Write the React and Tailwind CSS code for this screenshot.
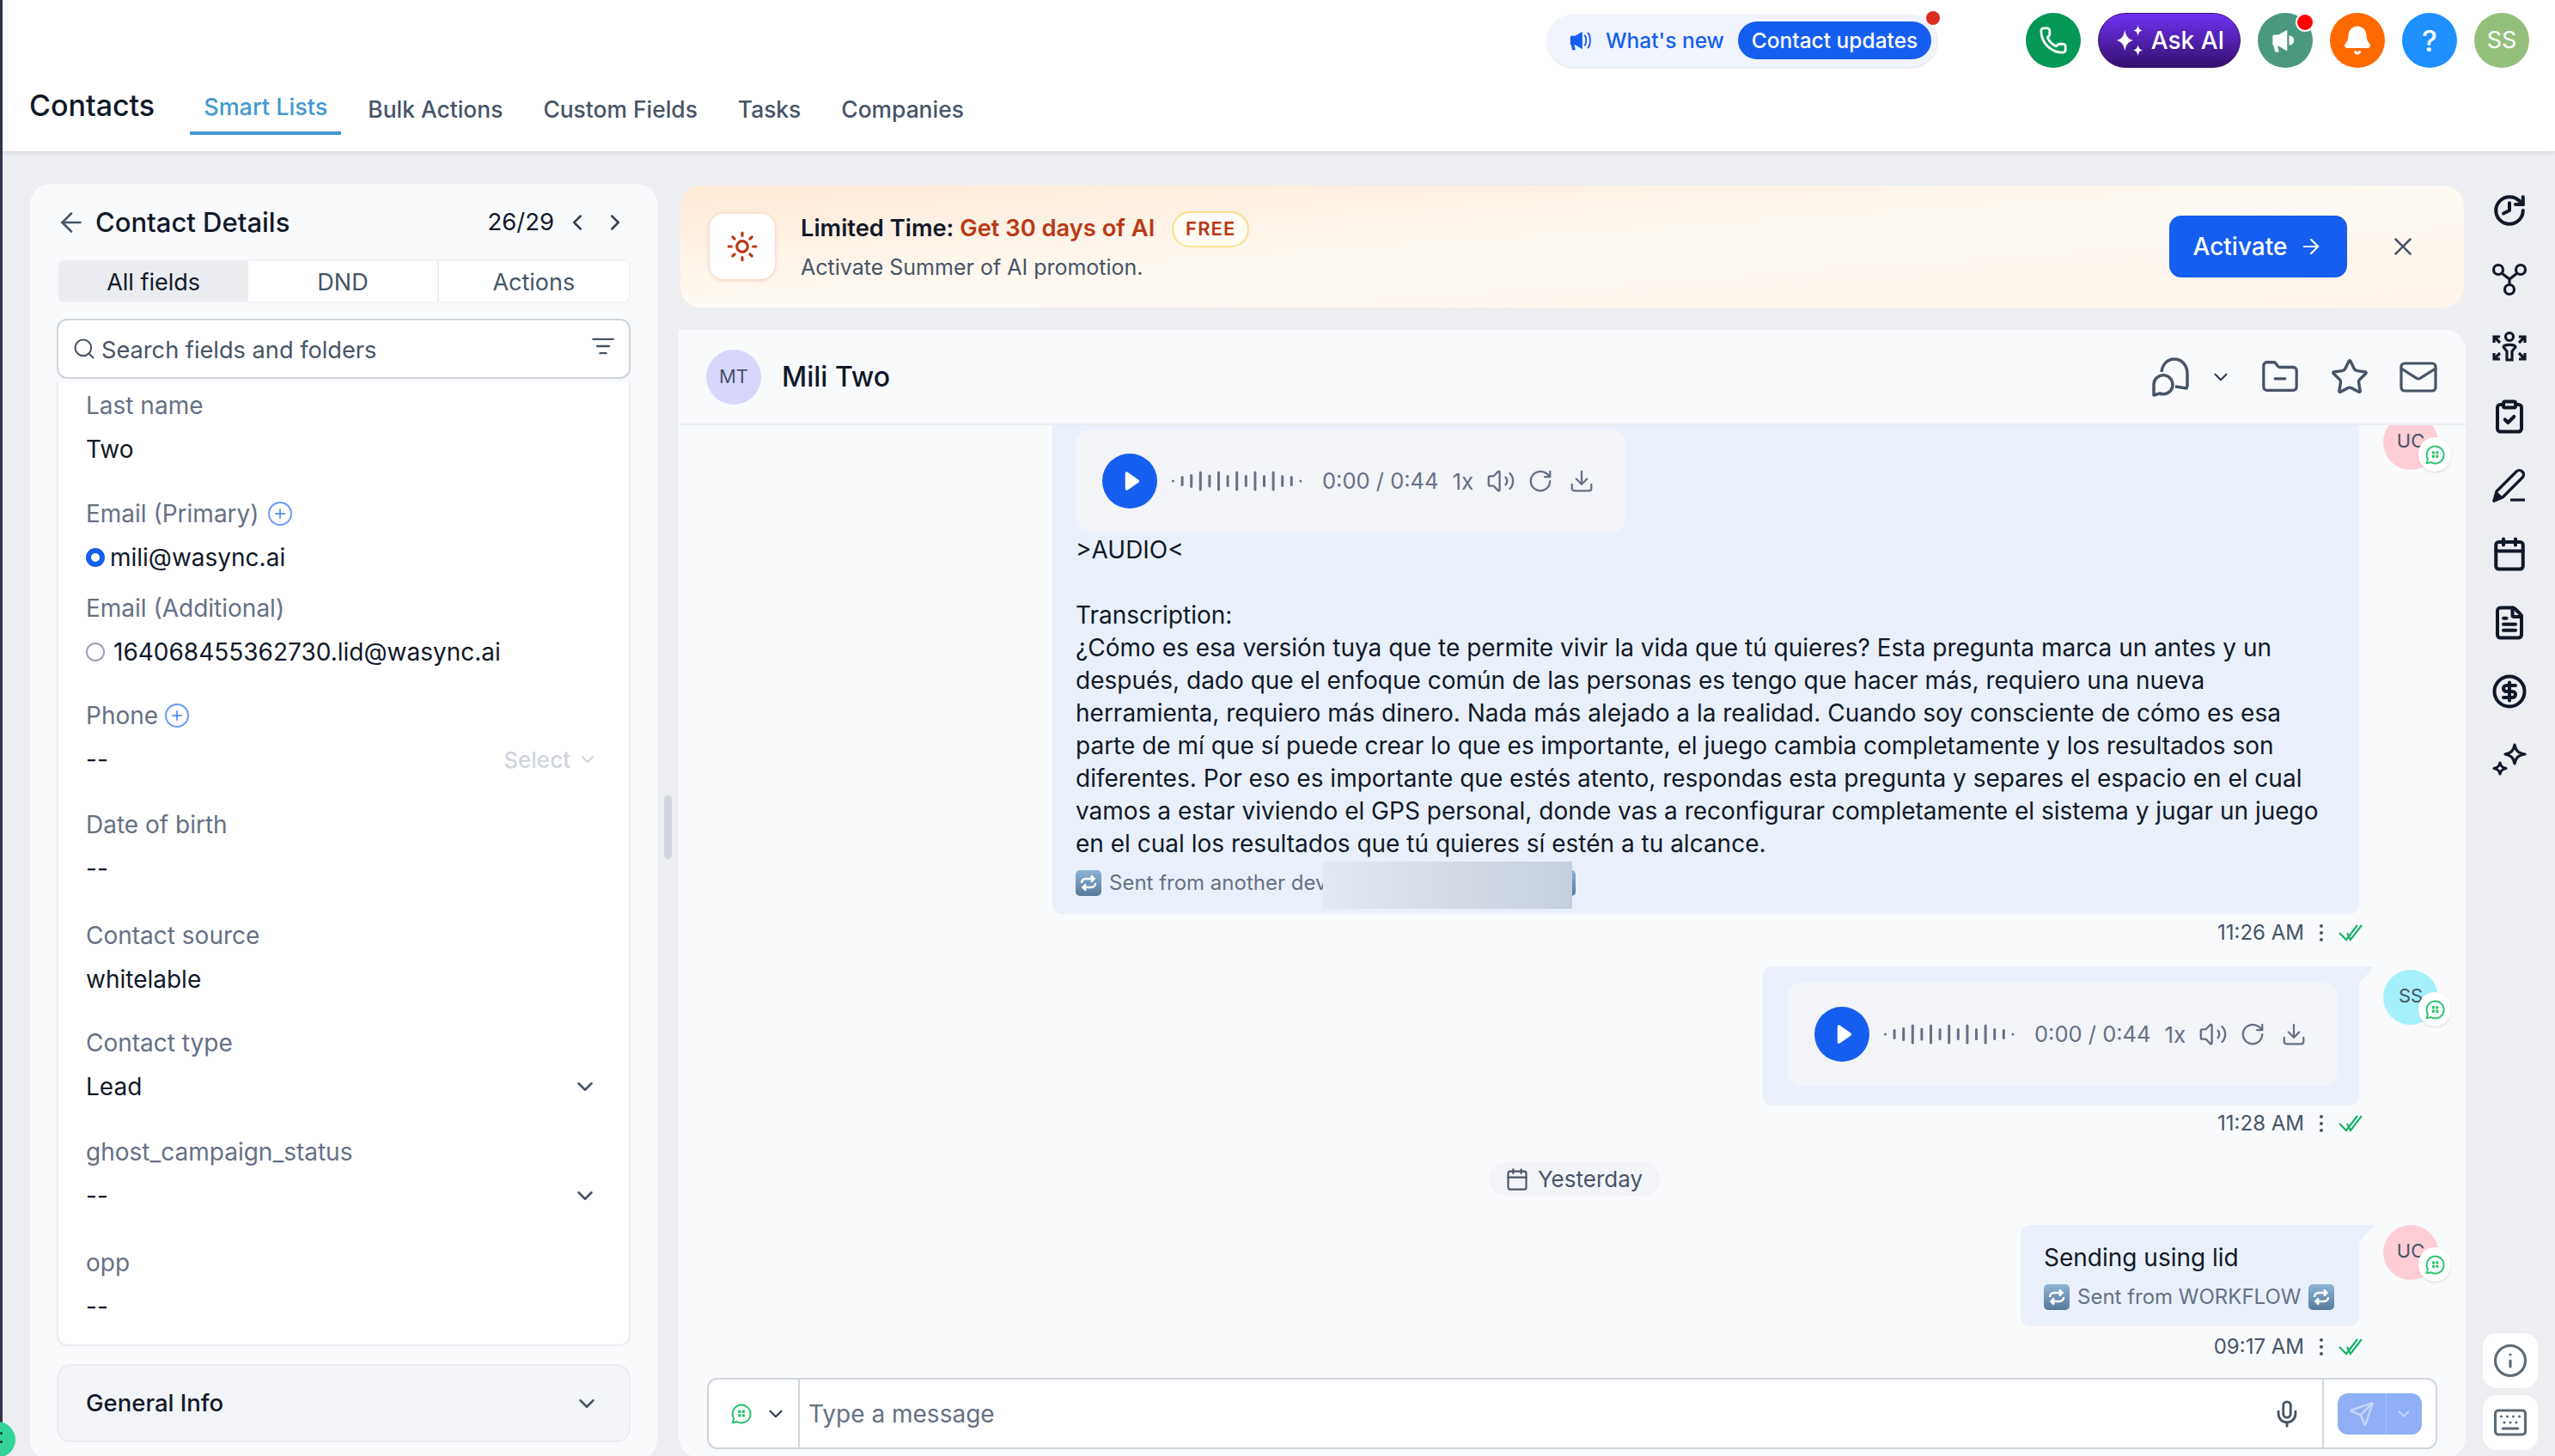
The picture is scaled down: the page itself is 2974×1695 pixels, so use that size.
import { ArrowLeft, ArrowRight, Bell, Calendar, ChevronDown, ChevronLeft, ChevronRight, CircleDollarSign, ClipboardCheck, Download, FileText, FolderMinus, History, Info, Keyboard, ListFilter, Mail, Mic, Phone, RotateCw, Search, Send, Star, Sun, Volume2, X, Plus } from 'lucide-react'

const tabs = ['Bulk Actions', 'Custom Fields', 'Tasks', 'Companies']

const transcript = [
  '¿Cómo es esa versión tuya que te permite vivir la vida que tú quieres? Esta pregunta marca un antes y un',
  'después, dado que el enfoque común de las personas es tengo que hacer más, requiero una nueva',
  'herramienta, requiero más dinero. Nada más alejado a la realidad. Cuando soy consciente de cómo es esa',
  'parte de mí que sí puede crear lo que es importante, el juego cambia completamente y los resultados son',
  'diferentes. Por eso es importante que estés atento, respondas esta pregunta y separes el espacio en el cual',
  'vamos a estar viviendo el GPS personal, donde vas a reconfigurar completamente el sistema y jugar un juego',
  'en el cual los resultados que tú quieres sí estén a tu alcance.',
]

const bars = [3, 12, 16, 23, 15, 23, 14, 23, 14, 23, 14, 23, 14, 12, 3]

const Sparkle = ({ className }) => (
  <svg viewBox="0 0 40 40" className={className} fill="currentColor">
    <path d="M13 7c1.400 8 3.800 11 10 13-6.200 2-8.600 5-10 13-1.400-8-3.800-11-10-13 6.200-2 8.600-5 10-13z" />
    <path d="M29 1c.8 4.600 2 6 5.500 7-3.500 1-4.700 2.400-5.500 7-.8-4.600-2-6-5.500-7 3.500-1 4.700-2.400 5.500-7zM29 25c.8 4.600 2 6 5.500 7-3.500 1-4.700 2.400-5.500 7-.8-4.600-2-6-5.500-7 3.500-1 4.700-2.400 5.500-7z" />
  </svg>
)

const Horn = ({ className, waves }) => (
  <svg viewBox="0 0 32 32" className={className} fill="currentColor">
    <path d="M3 12c0-1 .7-1.700 1.700-1.700H9L18 5v22l-9-5.300H8l1.500 6.300H5.500L4 21.700C3.400 21.500 3 21 3 20.300z" />
    {waves ? (
      <path d="M21 10c2 1.500 2 10.500 0 12M25 7c3.500 3 3.500 15 0 18" fill="none" stroke="currentColor" strokeWidth="2" strokeLinecap="round" />
    ) : (
      <path d="M20 11c3 0 5 2 5 5s-2 5-5 5z" />
    )}
  </svg>
)

const WaIcon = ({ className }) => (
  <svg viewBox="0 0 24 24" className={className} fill="none" stroke="currentColor" strokeWidth="1.800">
    <path d="M2.500 21.500l1.300-4.700A9.600 9.600 0 1 1 7.300 20.300z" strokeLinejoin="round" />
    <rect x="8.500" y="8" width="3" height="3" fill="currentColor" stroke="none" />
    <rect x="12.700" y="8" width="3" height="3" fill="currentColor" stroke="none" />
    <rect x="8.500" y="12.200" width="3" height="3" fill="currentColor" stroke="none" />
    <rect x="12.700" y="12.200" width="3" height="3" fill="currentColor" stroke="none" />
  </svg>
)

const Repeat = ({ className }) => (
  <svg viewBox="0 0 30 30" className={className}>
    <defs>
      <linearGradient id="rep" x1="0" y1="0" x2="0" y2="1">
        <stop offset="0" stopColor="#8fb3d6" />
        <stop offset="1" stopColor="#557a9c" />
      </linearGradient>
    </defs>
    <rect width="30" height="30" rx="5" fill="url(#rep)" />
    <path d="M7 15c0-3 2-5 5-5h9M18 6.500l3.500 3.500-3.500 3.500M23 15c0 3-2 5-5 5H9M12 16.500L8.500 20l3.500 3.500" fill="none" stroke="#fff" strokeWidth="2.500" />
  </svg>
)

const Ticks = () => (
  <svg viewBox="0 0 28 22" className="w-[28px] h-[22px] text-[#17b26a]" fill="none" stroke="currentColor" strokeWidth="2.200">
    <path d="M1 11l8 8L22 2M10 11l4 8L27 2" />
  </svg>
)

const Kebab = () => (
  <div className="flex flex-col gap-[4px] mx-[18px]">
    <span className="w-[4px] h-[4px] rounded-full bg-[#475467]" />
    <span className="w-[4px] h-[4px] rounded-full bg-[#475467]" />
    <span className="w-[4px] h-[4px] rounded-full bg-[#475467]" />
  </div>
)

const Player = ({ className }) => (
  <div className={`h-[120px] w-[640px] rounded-2xl bg-[#f2f4f7] flex items-center pl-[31px] text-[#667085] ${className}`}>
    <div className="w-[64px] h-[64px] rounded-full bg-[#155eef] flex items-center justify-center">
      <svg viewBox="0 0 24 24" className="w-[30px] h-[30px] ml-[2px]" fill="#fff">
        <path d="M7 5c0-1.500 1.200-2 2.300-1.300l10 7c1 .7 1 1.900 0 2.600l-10 7C8.200 21 7 20.500 7 19z" />
      </svg>
    </div>
    <svg viewBox="0 0 154 24" className="w-[154px] h-[24px] ml-[16px] text-[#667085]" fill="currentColor">
      {bars.map((h, i) => (
        <rect key={i} x={i * 10.600 + 1} y={12 - h / 2} width="3" height={h} rx="1.500" />
      ))}
    </svg>
    <span className="ml-[22px] text-[25.500px] whitespace-nowrap">0:00 / 0:44</span>
    <span className="ml-[16px] text-[26px]">1x</span>
    <Volume2 size={34} strokeWidth={1.700} className="ml-[15px]" />
    <RotateCw size={30} strokeWidth={1.800} className="ml-[14px]" />
    <Download size={30} strokeWidth={1.800} className="ml-[18px]" />
  </div>
)

const Avatar = ({ text, className }) => (
  <div className={`relative shrink-0 w-[64px] h-[64px] rounded-full flex items-center justify-center text-[22px] text-[#475467] ${className}`}>
    <span className="-translate-y-[2px]">{text}</span>
    <div className="absolute left-[41px] top-[26px] w-[38px] h-[40px] rounded-full bg-white flex items-center justify-center shadow-sm">
      <WaIcon className="w-[25px] h-[25px] text-[#25c46a]" />
    </div>
  </div>
)

const Tail = () => (
  <svg viewBox="0 0 18 22" className="absolute top-0 -right-[17px] w-[18px] h-[22px]">
    <path d="M0 0h18L0 22z" fill="#e9f0fb" />
  </svg>
)

const Meta = ({ time, className }) => (
  <div className={`h-[34px] pr-[88px] flex items-center justify-end text-[24px] text-[#475467] ${className}`}>
    <span>{time}</span>
    <Kebab />
    <Ticks />
  </div>
)

const fields = [
  { label: 'Last name', value: 'Two', mt: 'mt-0' },
  { label: 'Email (Primary)', plus: 'ml-[10px]', value: 'mili@wasync.ai', radio: true, on: true, mt: 'mt-[37px]' },
  { label: 'Email (Additional)', value: '164068455362730.lid@wasync.ai', radio: true, mt: 'mt-[21px]' },
  { label: 'Phone', plus: 'ml-[8px]', value: '--', select: true, mt: 'mt-[36px]' },
  { label: 'Date of birth', value: '--', mt: 'mt-[38px]' },
  { label: 'Contact source', value: 'whitelable', mt: 'mt-[40px]' },
  { label: 'Contact type', value: 'Lead', caret: true, mt: 'mt-[36px]' },
  { label: 'ghost_campaign_status', value: '--', caret: true, mt: 'mt-[38px]' },
  { label: 'opp', value: '--', mt: 'mt-[40px]' },
]

const Field = ({ f }) => (
  <div className={f.mt}>
    <div className="h-[38px] flex items-center text-[28px] text-[#667085]">
      {f.label}
      {f.plus && (
        <span className={`w-[28px] h-[28px] rounded-full border-2 border-[#6d9cf5] text-[#3b7bf0] flex items-center justify-center ${f.plus}`}>
          <Plus size={18} strokeWidth={2} />
        </span>
      )}
    </div>
    <div className="mt-[13px] h-[38px] flex items-center text-[28px] text-[#101828] pr-[36px]">
      {f.radio && (
        <span className={`shrink-0 w-[22px] h-[22px] rounded-full ${f.on ? 'mr-[6px] border-[6px] border-[#155eef] bg-white' : 'mr-[10px] border-2 border-[#98a2b3] bg-white'}`} />
      )}
      <span>{f.value}</span>
      {f.select && (
        <span className="ml-auto flex items-center gap-[8px] text-[#d0d5dd] text-[26px] font-medium">
          Select <ChevronDown size={24} />
        </span>
      )}
      {f.caret && <ChevronDown size={30} className="ml-auto text-[#475467]" />}
    </div>
  </div>
)

const App = () => {
  return (
    <div className="relative w-[2974px] h-[1695px] overflow-hidden bg-[#eceef2] pl-[3px] [font-family:Inter,sans-serif]">
      <div className="absolute left-0 top-0 w-[3px] h-full bg-[#2d3748]" />

      {/* top bar */}
      <header className="relative h-[176px] bg-white shadow-[0_2px_6px_rgba(16,24,40,0.1)]">
        <div className="h-[94px] flex items-center justify-end pr-[30px]">
          <div className="relative w-[454px] h-[61px] rounded-full bg-[#f0f4fd] shadow-sm flex items-center pl-[24px] pr-[7px] mr-[103px]">
            <Horn waves className="w-[30px] h-[30px] text-[#155eef]" />
            <span className="ml-[14px] text-[24.500px] font-medium text-[#155eef] whitespace-nowrap">What's new</span>
            <span className="ml-auto w-[225px] h-[44px] rounded-full bg-[#155eef] text-white text-[24.500px] font-medium flex items-center justify-center whitespace-nowrap">Contact updates</span>
            <span className="absolute -top-[4px] right-[-3px] w-[16px] h-[16px] rounded-full bg-[#d92d20]" />
          </div>
          <div className="w-[64px] h-[64px] rounded-full bg-[#039855] flex items-center justify-center text-white">
            <Phone size={34} strokeWidth={2} />
          </div>
          <div className="ml-[20px] w-[166px] h-[64px] rounded-full bg-gradient-to-b from-[#6e33f5] to-[#35106e] border border-[#35106e] flex items-center justify-center gap-[5px] text-white text-[28px] font-medium">
            <Sparkle className="w-[38px] h-[38px]" />
            Ask AI
          </div>
          <div className="relative ml-[20px] w-[64px] h-[64px] rounded-full bg-[#4a997f] flex items-center justify-center text-white">
            <Horn className="w-[36px] h-[36px]" />
            <span className="absolute top-0 right-[-2px] w-[22px] h-[22px] rounded-full bg-[#ff0000] border-2 border-white" />
          </div>
          <div className="ml-[20px] w-[64px] h-[64px] rounded-full bg-[#ff6a00] flex items-center justify-center text-white">
            <Bell size={36} fill="currentColor" />
          </div>
          <div className="ml-[20px] w-[64px] h-[64px] rounded-full bg-[#1e90ff] flex items-center justify-center text-white text-[34px] font-medium">?</div>
          <div className="ml-[20px] w-[64px] h-[64px] rounded-full bg-[#93bf7b] flex items-center justify-center text-white text-[27px]">SS</div>
        </div>
        <div className="absolute left-[31px] top-[96px] flex items-center h-[54px]">
          <span className="text-[34px] font-medium text-[#101828] leading-none">Contacts</span>
          <div className="relative ml-[57px] text-[27px] font-medium text-[#4299d0] translate-y-[2px]">
            Smart Lists
            <div className="absolute -left-[16px] -right-[16px] top-[48px] h-[4px] bg-[#4299d0]" />
          </div>
          {tabs.map((t) => (
            <span key={t} className="ml-[47px] text-[26.400px] font-medium text-[#475467] translate-y-[5px]">{t}</span>
          ))}
        </div>
      </header>

      <div className="flex pt-[38px]">
        {/* contact panel */}
        <aside className="ml-[32px] w-[730px] h-[1486px] shrink-0 rounded-3xl bg-[#f9fafc] px-[31px] pt-[23px]">
          <div className="h-[44px] flex items-center text-[#101828]">
            <ArrowLeft size={36} strokeWidth={1.700} className="-ml-[1px] text-[#475467]" />
            <span className="ml-[10px] text-[31px] font-medium">Contact Details</span>
            <span className="ml-auto text-[27.500px]">26/29</span>
            <ChevronLeft size={30} strokeWidth={2} className="ml-[12px] text-[#344054]" />
            <ChevronRight size={30} strokeWidth={2} className="ml-[14px] mr-[3px] text-[#344054]" />
          </div>
          <div className="mt-[21px] h-[51px] rounded-lg border-2 border-[#f2f4f7] bg-white grid grid-cols-3 text-[27px] overflow-hidden">
            <div className="pt-[3px] bg-[#eaecf0] text-[#101828] flex items-center justify-center">All fields</div>
            <div className="pt-[3px] border-r-2 border-[#eaecf0] text-[#475467] flex items-center justify-center">DND</div>
            <div className="pt-[3px] text-[#475467] flex items-center justify-center">Actions</div>
          </div>
          <div className="mt-[18px] h-[70px] rounded-xl border-2 border-[#d0d5dd] bg-white flex items-center px-[16px] text-[#475467] text-[27.200px]">
            <Search size={28} strokeWidth={1.800} />
            <span className="ml-[6px] translate-y-[2px]">Search fields and folders</span>
            <ListFilter size={28} strokeWidth={2} className="ml-auto -translate-y-[3px]" />
          </div>
          <div className="mt-[4px] h-[1122px] bg-white border-2 border-[#eaecf0] border-t-0 rounded-b-xl pl-[32px] pt-[8px]">
            {fields.map((f) => (
              <Field key={f.label} f={f} />
            ))}
          </div>
          <div className="mt-[21px] h-[91px] rounded-2xl bg-[#f2f4f7] border-2 border-[#eaecf0] flex items-center justify-between pl-[32px] pr-[34px] text-[27.500px] font-medium text-[#101828]">
            General Info
            <ChevronDown size={30} className="text-[#475467]" />
          </div>
        </aside>

        {/* drag handle */}
        <div className="w-[25px] shrink-0 flex justify-center pt-[712px]">
          <div className="w-[9px] h-[74px] rounded-full bg-[#d0d5dd]" />
        </div>

        <main className="w-[2080px] shrink-0">
          <div className="mt-[2px] mx-[2px] h-[142px] rounded-3xl bg-gradient-to-br from-[#fde9d6] via-[#fffaf3] to-[#fff4ea] flex items-center pl-[34px] pr-[54px]">
            <div className="w-[76px] h-[76px] rounded-2xl bg-white shadow-[0_1px_4px_rgba(185,56,21,0.25)] flex items-center justify-center">
              <Sun size={38} strokeWidth={2} className="text-[#b93815]" />
            </div>
            <div className="ml-[30px]">
              <div className="flex items-center h-[42px] text-[27.300px] font-semibold text-[#101828]">
                Limited Time:&nbsp;<span className="text-[#b93815]">Get 30 days of AI</span>
                <span className="ml-[20px] h-[42px] w-[90px] rounded-full border-2 border-[#fedf89] bg-[#fffcf5] text-[22px] tracking-wider text-[#b93815] flex items-center justify-center">FREE</span>
              </div>
              <div className="mt-[5px] text-[25px] leading-[36px] text-[#475467]">Activate Summer of AI promotion.</div>
            </div>
            <div className="ml-auto w-[207px] h-[72px] rounded-[14px] bg-[#155eef] text-white text-[28px] font-medium flex items-center justify-center gap-[14px]">
              Activate <ArrowRight size={28} strokeWidth={1.800} />
            </div>
            <X size={34} strokeWidth={1.800} className="ml-[48px] text-[#475467]" />
          </div>

          {/* conversation */}
          <section className="mt-[26px] w-[2080px] h-[1313px] rounded-tr-3xl rounded-b-3xl bg-[#f9fafc] flex flex-col">
            <div className="shrink-0 h-[111px] border-b-2 border-[#eaecf0] flex items-center pl-[32px] pr-[31px] text-[#475467]">
              <div className="w-[64px] h-[64px] rounded-full bg-[#d9d6fe] flex items-center justify-center text-[22px]">MT</div>
              <span className="ml-[24px] text-[32px] font-medium text-[#101828]">Mili Two</span>
              <svg viewBox="0 0 46 46" className="ml-auto w-[46px] h-[46px]" fill="none" stroke="currentColor" strokeWidth="3.500" strokeLinejoin="round">
                <path d="M12 17C13 8 19 2 27 2c9 0 15 8 15 17v14l-1 3-13-2" />
                <path d="M3 31a11 11 0 1 1 7 11l-7 2z" />
              </svg>
              <ChevronDown size={26} strokeWidth={2} className="ml-[22px] text-[#344054]" />
              <FolderMinus size={46} strokeWidth={1.700} className="ml-[33px]" />
              <Star size={46} strokeWidth={1.800} className="ml-[35px]" />
              <Mail size={48} strokeWidth={1.600} className="ml-[33px]" />
            </div>

            <div className="flex-1 min-h-0 overflow-hidden flex flex-col justify-end pb-[19px] pr-[32px] text-[#101828]">
              <div className="flex justify-end gap-[28px]">
                <div className="relative w-[1521px] bg-[#e9f0fb] rounded-b-xl shadow-[0_1px_2px_rgba(16,24,40,0.05)] pt-[10px] pb-[20px] pl-[27px]">
                  <Player />
                  <div className="mt-px text-[28px] leading-[38px]">
                    <div>&gt;AUDIO&lt;</div>
                    <div className="h-[38px]" />
                    <div>Transcription:</div>
                    {transcript.map((line) => (
                      <div key={line} className="whitespace-nowrap">{line}</div>
                    ))}
                  </div>
                  <div className="relative mt-[12px] h-[30px] flex items-center text-[24px] text-[#667085]">
                    <Repeat className="w-[30px] h-[30px]" />
                    <span className="ml-[9px] w-[513px]">Sent from another device</span>
                    <Repeat className="w-[30px] h-[30px]" />
                    <div className="absolute left-[288px] -top-[10px] w-[290px] h-[55px] bg-gradient-to-r from-[#e3e9f3] via-[#d6dce7] to-[#c4cfdf]" />
                  </div>
                </div>
                <Avatar text="UC" className="bg-[#fecdd6] mt-[-7px] self-start" />
              </div>
              <Meta time="11:26 AM" className="mt-[6px]" />

              <div className="mt-[22px] flex justify-end gap-[28px]">
                <div className="relative w-[694px] h-[161px] bg-[#e9f0fb] rounded-xl rounded-tr-none shadow-[0_1px_2px_rgba(16,24,40,0.05)] pl-[29px] pt-[19px]">
                  <Tail />
                  <Player />
                </div>
                <Avatar text="SS" className="bg-[#a5f0fc] mt-[4px] self-start" />
              </div>
              <Meta time="11:28 AM" className="mt-[5px]" />

              <div className="mt-[28px] self-center ml-[36px] h-[50px] w-[199px] rounded-full bg-[#f2f4f7] flex items-center justify-center gap-[10px] text-[26px] text-[#475467]">
                <Calendar size={28} strokeWidth={1.800} />
                Yesterday
              </div>

              <div className="mt-[34px] flex justify-end gap-[28px]">
                <div className="relative w-[394px] h-[117px] bg-[#e9f0fb] rounded-xl rounded-tr-none shadow-[0_1px_2px_rgba(16,24,40,0.05)] pl-[27px] pt-[19px]">
                  <Tail />
                  <div className="text-[28px] leading-[38px]">Sending using lid</div>
                  <div className="mt-[12px] flex items-center h-[30px] text-[24px] text-[#667085] whitespace-nowrap">
                    <Repeat className="w-[30px] h-[30px]" />
                    <span className="ml-[9px]">Sent from WORKFLOW</span>
                    <Repeat className="ml-[9px] w-[30px] h-[30px]" />
                  </div>
                </div>
                <Avatar text="UC" className="bg-[#fecdd6] self-start" />
              </div>
              <Meta time="09:17 AM" className="mt-[8px]" />
            </div>

            <div className="shrink-0 h-[83px] mx-[33px] mb-[10px] rounded-xl border-2 border-[#d0d5dd] bg-white flex items-center text-[#667085]">
              <div className="w-[106px] h-full border-r-2 border-[#d0d5dd] flex items-center pl-[25px] gap-[14px]">
                <WaIcon className="w-[26px] h-[26px] text-[#25c46a]" />
                <ChevronDown size={26} strokeWidth={2} className="text-[#344054]" />
              </div>
              <span className="ml-[10px] text-[28px]">Type a message</span>
              <Mic size={34} strokeWidth={2} className="ml-auto text-[#475467]" />
              <div className="ml-[24px] h-full w-[132px] border-l-2 border-[#d0d5dd] flex items-center pl-[16px]">
                <div className="w-[98px] h-[48px] rounded-xl bg-[#8fb0f7] flex items-center text-[#c5d6fb]">
                  <div className="w-[57px] h-full border-r border-[#a9c2f9] flex items-center justify-center">
                    <Send size={30} strokeWidth={2} />
                  </div>
                  <ChevronDown size={22} strokeWidth={2} className="ml-[9px]" />
                </div>
              </div>
            </div>
          </section>
        </main>

        {/* right rail */}
        <nav className="relative w-[101px] shrink-0 flex flex-col items-center pt-[10px] gap-[38px] text-[#101828]">
          <History size={42} strokeWidth={2.300} className="-scale-x-100" />
          <svg viewBox="0 0 42 42" className="w-[42px] h-[42px]" fill="none" stroke="currentColor" strokeWidth="3.200">
            <circle cx="8" cy="10" r="5.500" />
            <circle cx="34" cy="10" r="5.500" />
            <circle cx="21" cy="33" r="5.500" />
            <path d="M12 14l9 7 9-7M21 21v6.500" />
          </svg>
          <svg viewBox="0 0 42 42" className="w-[42px] h-[42px]" fill="none" stroke="currentColor" strokeWidth="3.200">
            <circle cx="21" cy="8" r="4.500" />
            <path d="M14 20c0-3.500 14-3.500 14 0l-4 5v10h-6V25z" />
            <path d="M3 15V8h7M3 8l7 7M39 15V8h-7M39 8l-7 7M3 27v7h7M3 34l7-7M39 27v7h-7M39 34l-7-7" />
          </svg>
          <ClipboardCheck size={42} strokeWidth={2.300} />
          <svg viewBox="0 0 42 42" className="w-[42px] h-[42px]" fill="none" stroke="currentColor" strokeWidth="3.200" strokeLinejoin="round">
            <path d="M3 39l3-11L29 5c2-2 5-2 7 0s2 5 0 7L13 35z" />
            <path d="M3 39l4-8 4 4z" fill="currentColor" />
            <path d="M22 38h17" />
          </svg>
          <Calendar size={42} strokeWidth={2.300} />
          <FileText size={42} strokeWidth={2.300} />
          <CircleDollarSign size={42} strokeWidth={2.300} />
          <svg viewBox="0 0 42 42" className="w-[42px] h-[42px]" fill="none" stroke="currentColor" strokeWidth="3.200" strokeLinejoin="round">
            <path d="M27 3c1.500 7 4 9.500 12 11-8 1.500-10.500 4-12 11-1.500-7-4-9.500-11-11 7-1.500 9.500-4 11-11z" />
            <path d="M10 24c.8 4 2.300 5.500 7 6.500-4.700 1-6.200 2.500-7 6.500-.8-4-2.300-5.500-7-6.500 4.700-1 6.200-2.500 7-6.500z" />
          </svg>
          <div className="absolute left-[20px] top-[1338px] flex flex-col gap-[8px] text-[#5f6b76]">
            <div className="w-[64px] h-[64px] rounded-2xl bg-white flex items-center justify-center">
              <Info size={42} strokeWidth={1.800} />
            </div>
            <div className="w-[64px] h-[64px] rounded-2xl bg-white flex items-center justify-center">
              <Keyboard size={42} strokeWidth={1.800} />
            </div>
          </div>
        </nav>
      </div>

      {/* floating widget cut by the edge */}
      <div className="absolute -left-[24px] top-[1655px] w-[42px] h-[42px] rounded-full bg-[#34d399]">
        <span className="absolute left-[24px] top-[12px] w-[3px] h-[3px] rounded-full bg-[#1f2937]" />
        <span className="absolute left-[24px] top-[22px] w-[3px] h-[3px] rounded-full bg-[#1f2937]" />
      </div>
    </div>
  )
}

export default App
